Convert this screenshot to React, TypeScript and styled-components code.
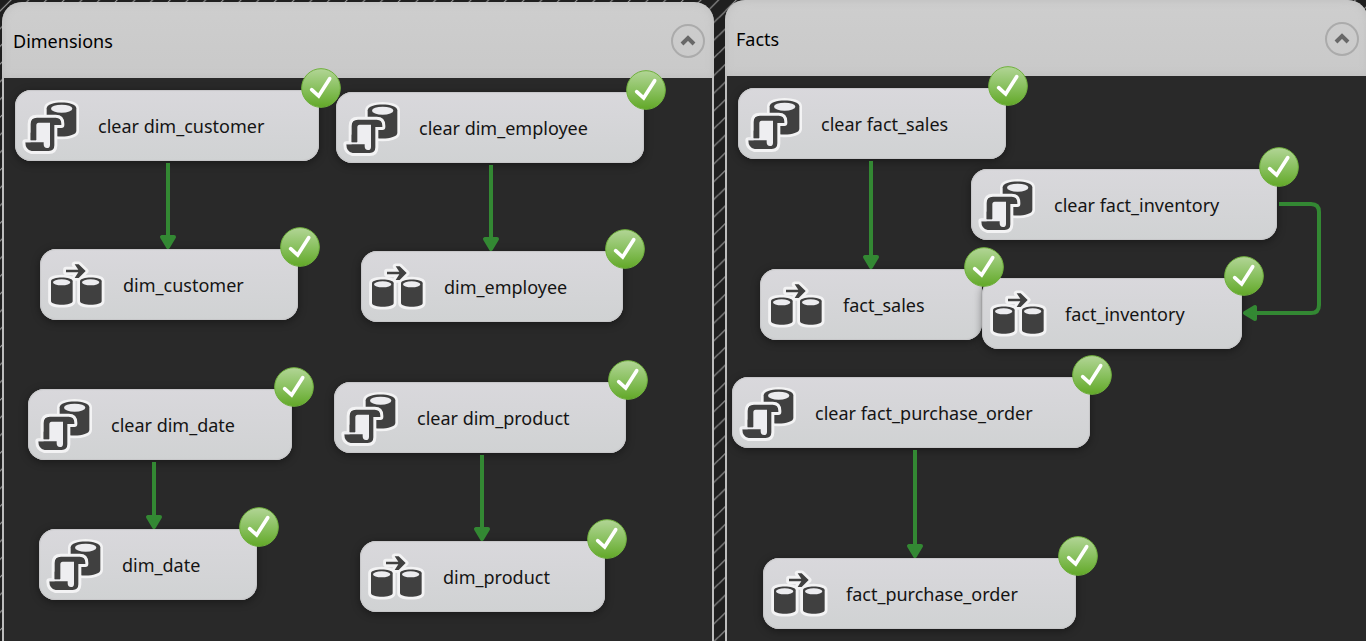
import React from "react";
import styled, { createGlobalStyle } from "styled-components";

const GlobalStyle = createGlobalStyle`
  *, *::before, *::after { box-sizing: border-box; }
  body {
    margin: 0;
    background: #1f1f1f;
    font-family: "Noto Sans", Tahoma, sans-serif;
  }
`;

const Page = styled.div`
  overflow: hidden;
`;

const Designer = styled.main`
  position: relative;
  display: grid;
  grid-template-columns: minmax(0, 712fr) minmax(0, 643fr);
  column-gap: 11px;
  min-height: 100vh;
  padding-left: 2px;
  margin-right: -2px;
`;

const Hatch = styled.svg`
  position: absolute;
  inset: 0;
  width: 100%;
  height: 100%;
`;

const Container = styled.section<{ $top: number }>`
  position: relative;
  display: flex;
  flex-direction: column;
  margin-top: ${(p) => p.$top}px;
`;

const Header = styled.header`
  display: flex;
  align-items: center;
  justify-content: space-between;
  height: 76px;
  padding: 2px 9px 0 11px;
  border-radius: 20px 20px 0 0;
  background: linear-gradient(#cecece, #c9c9c9);
  box-shadow: inset 0 0 8px #bdbdbd;
`;

const Title = styled.h2`
  margin: 0;
  font-size: 18px;
  line-height: 26px;
  font-weight: 400;
  color: #000;
`;

const Collapse = styled.button`
  display: flex;
  align-items: center;
  justify-content: center;
  width: 34px;
  height: 34px;
  padding: 0;
  border: 2px solid #ababab;
  border-radius: 50%;
  background: transparent;
  cursor: pointer;
`;

const Canvas = styled.div`
  position: relative;
  flex: 1;
  min-height: 563px;
  border: 2px solid #bdbdbd;
  border-width: 0 2px;
  background: #292929;
`;

const Links = styled.svg`
  position: absolute;
  top: 0;
  left: 0;
  width: 100%;
  height: 100%;
`;

const Task = styled.div<{ $x: number; $y: number; $w: number }>`
  position: absolute;
  left: ${(p) => p.$x}px;
  top: ${(p) => p.$y}px;
  width: ${(p) => p.$w}px;
  height: 71px;
  display: flex;
  align-items: center;
  gap: 18px;
  padding-left: 5px;
  border-radius: 16px;
  background: linear-gradient(#d9d8dc, #d0d2d3);
  box-shadow: inset 0 0 1px 1px #c6c6c8, 0 2px 8px rgba(0, 0, 0, 0.4);
`;

const TaskName = styled.span`
  font-size: 18px;
  line-height: 26px;
  white-space: nowrap;
  color: #141414;
`;

const Badge = styled.svg`
  position: absolute;
  top: -22px;
  right: -22px;
  width: 40px;
  height: 40px;
  z-index: 2;
`;

const DARK = "#404040";
const HALO = "#f3f3f4";
const LINK = "#338833";

/* A scroll in front of a database barrel: the Execute SQL task. */
function ScriptIcon() {
  const barrel = "M95 67 C95 44 184 44 184 67 V135 C184 157 95 157 95 135 Z";
  const scroll =
    "M47 163 V114 Q47 95 66 95 H122 Q139 95 139 113 V117 H118 V178 Q118 195 101 195 H50 Q31 191 31 169 H47 Z";
  return (
    <svg width="60" height="60" viewBox="15 30 180 180" aria-hidden="true">
      <path d={barrel} fill={HALO} stroke={HALO} strokeWidth="16" strokeLinejoin="round" />
      <path d={barrel} fill={DARK} />
      <ellipse cx="140" cy="68" rx="32" ry="12" fill="#ececef" />
      <path d={scroll} fill={HALO} stroke={HALO} strokeWidth="18" strokeLinejoin="round" />
      <path d={scroll} fill={DARK} />
      <path d="M30 162 H64 V118 Q64 110 71 110 H105 V176 Q105 186 96 186 Q86 186 86 175 V169 H30 Z" fill="#eeeef1" />
      <path d="M47 163 V140 H63 V163 Z" fill={DARK} />
    </svg>
  );
}

/* Two barrels with an arrow over them: the Data Flow task. */
function DataFlowIcon() {
  const left = "M33 121 C33 106 98 106 98 121 V180 C98 195 33 195 33 180 Z";
  const right = "M120 121 C120 106 185 106 185 121 V180 C185 195 120 195 120 180 Z";
  const arrow = "M78 86 H115 L104 70 H116 L137 90 L116 111 H104 L115 94 H78 Z";
  return (
    <svg width="60" height="60" viewBox="15 42 180 180" aria-hidden="true">
      <g fill={HALO} stroke={HALO} strokeWidth="17" strokeLinejoin="round">
        <path d={left} />
        <path d={right} />
        <path d={arrow} />
      </g>
      <g fill={DARK}>
        <path d={left} />
        <path d={right} />
        <path d={arrow} />
      </g>
      <ellipse cx="65" cy="124" rx="26" ry="9" fill="#ececef" />
      <ellipse cx="152" cy="124" rx="26" ry="9" fill="#ececef" />
    </svg>
  );
}

function SuccessBadge() {
  return (
    <Badge viewBox="0 0 120 120" role="img" aria-label="Succeeded">
      <defs>
        <linearGradient id="success" x1="0" y1="0" x2="0" y2="1">
          <stop offset="0" stopColor="#b2d596" />
          <stop offset="0.5" stopColor="#8ac160" />
          <stop offset="1" stopColor="#62a828" />
        </linearGradient>
      </defs>
      <circle cx="60" cy="60" r="58" fill="url(#success)" stroke="#6fb03c" strokeWidth="3" />
      <path d="M32 65 L53 84 L86 32" fill="none" stroke="#fff" strokeWidth="11" strokeLinecap="round" />
    </Badge>
  );
}

type Kind = "script" | "flow";
type TaskData = { name: string; kind: Kind; x: number; y: number; w: number };
type LinkData = { line: string; head: string };

/* A straight precedence link that runs down from one task to the next. */
const down = (x: number, from: number, to: number): LinkData => ({
  line: `M${x} ${from} V${to - 12}`,
  head: `M${x - 6} ${to - 12} H${x + 6} L${x} ${to - 2} Z`,
});

const dimensionTasks: TaskData[] = [
  { name: "clear dim_customer", kind: "script", x: 11, y: 12, w: 304 },
  { name: "clear dim_employee", kind: "script", x: 332, y: 14, w: 308 },
  { name: "dim_customer", kind: "flow", x: 36, y: 171, w: 258 },
  { name: "dim_employee", kind: "flow", x: 357, y: 173, w: 262 },
  { name: "clear dim_date", kind: "script", x: 24, y: 311, w: 264 },
  { name: "clear dim_product", kind: "script", x: 330, y: 304, w: 292 },
  { name: "dim_date", kind: "script", x: 35, y: 451, w: 218 },
  { name: "dim_product", kind: "flow", x: 356, y: 463, w: 245 },
];

const dimensionLinks: LinkData[] = [
  down(164, 85, 171),
  down(487, 87, 173),
  down(150, 384, 451),
  down(478, 377, 463),
];

const factTasks: TaskData[] = [
  { name: "clear fact_sales", kind: "script", x: 11, y: 12, w: 268 },
  { name: "clear fact_inventory", kind: "script", x: 244, y: 93, w: 306 },
  { name: "fact_sales", kind: "flow", x: 33, y: 193, w: 222 },
  { name: "fact_inventory", kind: "flow", x: 255, y: 202, w: 260 },
  { name: "clear fact_purchase_order", kind: "script", x: 5, y: 301, w: 358 },
  { name: "fact_purchase_order", kind: "flow", x: 36, y: 482, w: 313 },
];

const factLinks: LinkData[] = [
  down(144, 85, 193),
  down(188, 374, 482),
  {
    line: "M552 128 H584 Q592 128 592 136 V229 Q592 237 584 237 H528",
    head: "M528 231 V243 L518 237 Z",
  },
];

type SequenceProps = { title: string; top: number; tasks: TaskData[]; links: LinkData[] };

function Sequence({ title, top, tasks, links }: SequenceProps) {
  return (
    <Container $top={top}>
      <Header>
        <Title>{title}</Title>
        <Collapse type="button" aria-label={`Collapse ${title}`}>
          <svg width="16" height="12" viewBox="0 0 16 12" aria-hidden="true">
            <path d="M2 9 L8 3 L14 9" fill="none" stroke="#686868" strokeWidth="4" />
          </svg>
        </Collapse>
      </Header>
      <Canvas>
        {tasks.map((t) => (
          <Task key={t.name} $x={t.x} $y={t.y} $w={t.w}>
            {t.kind === "script" ? <ScriptIcon /> : <DataFlowIcon />}
            <TaskName>{t.name}</TaskName>
            <SuccessBadge />
          </Task>
        ))}
        <Links aria-hidden="true">
          {links.map((l) => (
            <g key={l.line}>
              <path d={l.line} fill="none" stroke={LINK} strokeWidth="4" />
              <path d={l.head} fill={LINK} stroke={LINK} strokeWidth="4" strokeLinejoin="round" />
            </g>
          ))}
        </Links>
      </Canvas>
    </Container>
  );
}

export default function App() {
  return (
    <Page>
      <GlobalStyle />
      <Designer>
        <Hatch aria-hidden="true">
          <defs>
            <pattern id="hatch" width="17.69" height="17.69" patternUnits="userSpaceOnUse">
              <path d="M-7 18 L18 -7 M4 25 L25 4" stroke="#a2a2a2" strokeWidth="1" />
            </pattern>
          </defs>
          <rect width="100%" height="100%" fill="url(#hatch)" />
        </Hatch>
        <Sequence title="Dimensions" top={2} tasks={dimensionTasks} links={dimensionLinks} />
        <Sequence title="Facts" top={0} tasks={factTasks} links={factLinks} />
      </Designer>
    </Page>
  );
}
